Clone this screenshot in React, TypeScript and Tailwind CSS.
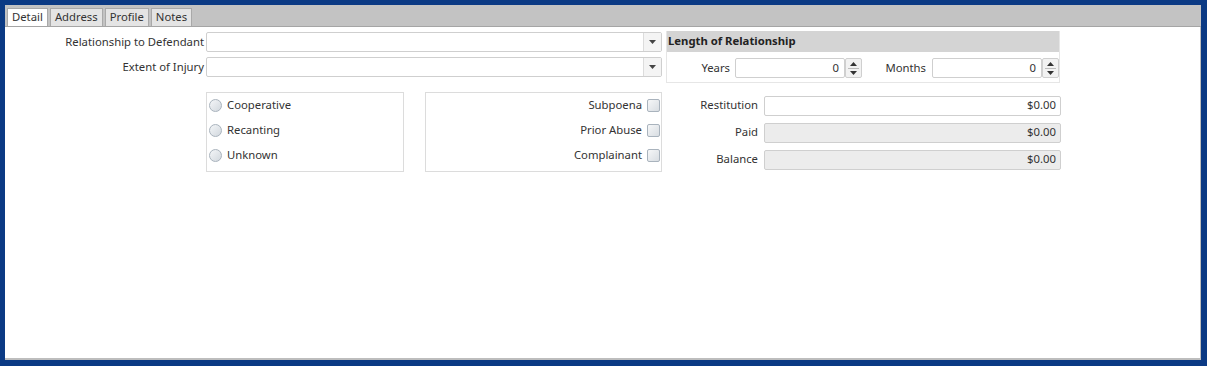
import React from "react";

const font = { fontFamily: '"Noto Sans", "Open Sans", sans-serif' };

function Combo() {
  return (
    <div className="flex h-[20px] w-[456px] rounded-[2px] border border-[#cfcfcf] bg-white">
      <div className="flex-1" />
      <div className="flex w-[18px] items-center justify-center border-l border-[#dcdcdc] bg-[#f4f4f4]">
        <svg width="7" height="4" viewBox="0 0 7 4">
          <path d="M0 0 L7 0 L3.5 4 Z" fill="#444" />
        </svg>
      </div>
    </div>
  );
}

function Spin({ w }: { w: string }) {
  return (
    <div className="flex items-center">
      <div className={`flex h-[20px] ${w} items-center justify-end rounded-[2px] border border-[#cfcfcf] bg-white pr-[5px] text-[11.3px] text-[#333]`}>0</div>
      <div className="flex h-[20px] w-[17px] flex-col items-center justify-center gap-[2px] rounded-[2px] border border-[#cfcfcf] bg-[#f2f2f2]">
        <svg width="7" height="4" viewBox="0 0 7 4">
          <path d="M0 4 L7 4 L3.5 0 Z" fill="#333" />
        </svg>
        <div className="h-px w-[11px] bg-[#bbb]" />
        <svg width="7" height="4" viewBox="0 0 7 4">
          <path d="M0 0 L7 0 L3.5 4 Z" fill="#333" />
        </svg>
      </div>
    </div>
  );
}

function Radio({ label }: { label: string }) {
  return (
    <div className="flex h-[25px] items-center gap-[5px]">
      <div className="h-[13px] w-[13px] rounded-full border border-[#a9b3bd] bg-gradient-to-br from-[#f4f6f8] to-[#d2d8de]" />
      <span className="text-[11.3px] text-[#333]">{label}</span>
    </div>
  );
}

function Check({ label }: { label: string }) {
  return (
    <div className="flex h-[25px] items-center justify-end gap-[5px]">
      <span className="text-[11.3px] text-[#333]">{label}</span>
      <div className="h-[13px] w-[13px] rounded-[2px] border border-[#a9b3bd] bg-gradient-to-br from-[#f6f7f8] to-[#d8dde2]" />
    </div>
  );
}

function Money({ label, grey }: { label: string; grey?: boolean }) {
  return (
    <div className="flex h-[27px] items-center">
      <div className="w-[96px] pr-[6px] text-right text-[11.3px] text-[#333]">{label}</div>
      <div
        className={`flex h-[20px] w-[297px] items-center justify-end rounded-[2px] border border-[#cfcfcf] pr-[4px] text-[11.3px] text-[#333] ${
          grey ? "bg-[#ececec]" : "bg-white"
        }`}
      >
        $0.00
      </div>
    </div>
  );
}

function Tab({ label, active }: { label: string; active?: boolean }) {
  return (
    <div
      className={`flex h-[18px] items-center border border-b-0 border-[#a9a9a9] px-[4px] text-[11.3px] text-[#333] ${
        active ? "bg-white" : "bg-[#e4e4e4]"
      }`}
    >
      {label}
    </div>
  );
}

export default function App() {
  return (
    <div className="h-[366px] w-[1207px] bg-[#0b3a84] pb-[6px] pl-[5px] pr-[6px] pt-[5px]" style={font}>
      <div className="flex h-full w-full flex-col bg-[#c3c3c3]">
        <div className="flex h-[22px] items-end gap-[2px] border-b border-[#a5a5a5] pl-[2px]">
          <Tab label="Detail" active />
          <Tab label="Address" />
          <Tab label="Profile" />
          <Tab label="Notes" />
        </div>
        <div className="flex-1 border-b-2 border-r border-[#bdbdbd] bg-white pt-[4px]">
          <div className="flex">
            <div className="mt-[1px] flex flex-col gap-[5px]">
              <div className="flex items-center">
                <div className="w-[201px] pr-[2px] text-right text-[11.3px] text-[#333]">Relationship to Defendant</div>
                <Combo />
              </div>
              <div className="flex items-center">
                <div className="w-[201px] pr-[2px] text-right text-[11.3px] text-[#333]">Extent of Injury</div>
                <Combo />
              </div>
            </div>
            <div className="ml-[4px] flex h-[52px] w-[394px] flex-col border-b border-r border-l border-[#e6e6e6]">
              <div className="flex h-[21px] items-center bg-[#d4d4d4] pl-[1px] text-[11.3px] font-bold text-[#222]">
                Length of Relationship
              </div>
              <div className="mt-[6px] flex items-center">
                <div className="w-[68px] pr-[5px] text-right text-[11.3px] text-[#333]">Years</div>
                <Spin w="w-[110px]" />
                <div className="w-[70px] pr-[6px] text-right text-[11.3px] text-[#333]">Months</div>
                <Spin w="w-[110px]" />
              </div>
            </div>
          </div>
          <div className="mt-[9px] flex">
            <div className="ml-[201px] flex h-[80px] w-[198px] flex-col border border-[#dcdcdc] pl-[2px]">
              <Radio label="Cooperative" />
              <Radio label="Recanting" />
              <Radio label="Unknown" />
            </div>
            <div className="ml-[21px] flex h-[80px] w-[237px] flex-col border border-[#dcdcdc] pr-[1px]">
              <Check label="Subpoena" />
              <Check label="Prior Abuse" />
              <Check label="Complainant" />
            </div>
            <div className="ml-[6px] flex flex-col">
              <Money label="Restitution" />
              <Money label="Paid" grey />
              <Money label="Balance" grey />
            </div>
          </div>
        </div>
      </div>
    </div>
  );
}
